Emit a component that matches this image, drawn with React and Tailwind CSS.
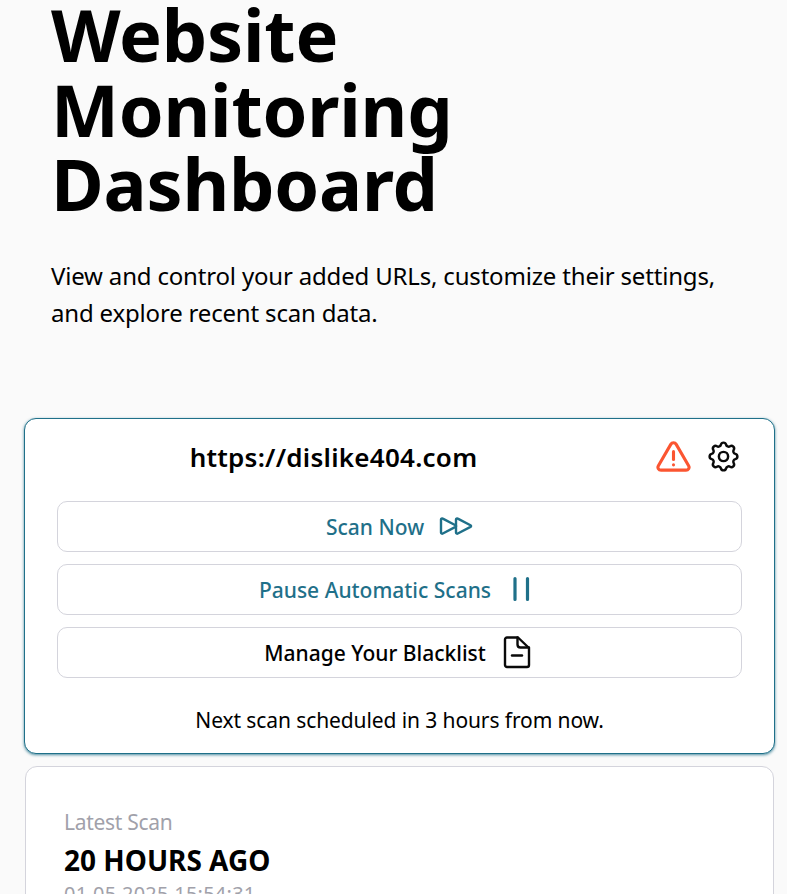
import React from "react";

function ScanIcon() {
  return (
    <svg width="34" height="20" viewBox="0 0 34 20" fill="none" stroke="#1f7089" strokeWidth="2.4" strokeLinejoin="round" strokeLinecap="round">
      <path d="M2 3.6c0-1 1-1.5 1.8-1L16.5 9.2c.8.4.8 1.3 0 1.7L3.8 17.5c-.8.5-1.8 0-1.8-1z" />
      <path d="M17 3.6c0-1 1-1.500 1.800-1l12.700 6.600c.8.400.8 1.300 0 1.700l-12.700 6.600c-.8.500-1.800 0-1.800-1z" />
    </svg>
  );
}

function PauseIcon() {
  return (
    <svg width="34" height="34" viewBox="0 0 34 34" fill="none" stroke="#1f7089" strokeWidth="3.2" strokeLinecap="round">
      <path d="M9 6.500v21M21.500 6.500v21" />
    </svg>
  );
}

function FileIcon() {
  return (
    <svg width="34" height="34" viewBox="0 0 34 34" fill="none" stroke="#0a0a0a" strokeWidth="2.4" strokeLinejoin="round" strokeLinecap="round">
      <path d="M4 4.500C4 3.200 4.900 2.500 6 2.500H17L28 13V30c0 1.200-.9 2-2 2H6c-1.100 0-2-.8-2-2z" />
      <path d="M16.500 2.500V9.500c0 1.800 1.200 3 3 3H28" />
      <path d="M11 20.500h10" />
    </svg>
  );
}

function WarnIcon() {
  return (
    <svg width="35" height="31" viewBox="0 0 36 32" fill="none" stroke="#fb5531" strokeWidth="3.2" strokeLinecap="round" strokeLinejoin="round">
      <path d="M15.200 3.500 2.400 25.500c-1.300 2.200.2 4.600 2.700 4.600h25.800c2.500 0 4-2.400 2.700-4.600L20.800 3.500c-1.300-2.200-4.300-2.200-5.600 0z" />
      <path d="M18 11v8" />
      <path d="M18 24.500v.1" />
    </svg>
  );
}

function GearIcon() {
  return (
    <svg width="37" height="37" viewBox="0 0 24 24" fill="none" stroke="#0a0a0a" strokeWidth="1.6" strokeLinecap="round" strokeLinejoin="round">
      <path d="M10.325 4.317c.426-1.756 2.924-1.756 3.350 0a1.724 1.724 0 0 0 2.573 1.066c1.543-.94 3.310.826 2.370 2.370a1.724 1.724 0 0 0 1.065 2.572c1.756.426 1.756 2.924 0 3.350a1.724 1.724 0 0 0-1.066 2.573c.94 1.543-.826 3.310-2.370 2.370a1.724 1.724 0 0 0-2.572 1.065c-.426 1.756-2.924 1.756-3.350 0a1.724 1.724 0 0 0-2.573-1.066c-1.543.94-3.310-.826-2.370-2.370a1.724 1.724 0 0 0-1.065-2.572c-1.756-.426-1.756-2.924 0-3.350a1.724 1.724 0 0 0 1.066-2.573c-.94-1.543.826-3.310 2.370-2.370.996.608 2.296.070 2.572-1.065z" />
      <circle cx="12" cy="12" r="3" />
    </svg>
  );
}

function ActionButton({ label, icon, className }) {
  return (
    <button className={`flex h-[51px] w-full items-center justify-center gap-[15px] rounded-[10px] border border-[#d4d4dc] bg-white text-[21px] font-medium ${className}`}>
      <span className="pt-[4px]">{label}</span>
      {icon}
    </button>
  );
}

export default function App() {
  return (
    <div className="h-[894px] overflow-hidden bg-[#fafafa] font-['Noto_Sans',sans-serif] text-black">
      <header className="px-[51px]">
        <h1 className="-mt-[3px] w-[500px] text-[72px] font-bold leading-[74.5px] tracking-[-0.2px]">
          Website Monitoring Dashboard
        </h1>
        <p className="mt-[36px] w-[680px] text-[24px] leading-[37px] tracking-[-0.18px]">
          View and control your added URLs, customize their settings, and explore recent scan data.
        </p>
      </header>

      <main className="mt-[87px] flex flex-col items-center gap-[12px] pl-[24px] pr-[12px]">
        <section className="w-full rounded-[12px] border border-[#1f7089] bg-white px-[32px] pb-[17px] pt-[14px] shadow-[0_1px_3px_rgba(31,112,137,0.8)]">
          <div className="flex h-[48px] items-center">
            <h2 className="w-[553px] pt-[1px] text-center text-[26px] font-semibold tracking-[0.25px]">https://dislike404.com</h2>
            <div className="ml-[46px] flex items-center gap-[14px]">
              <WarnIcon />
              <GearIcon />
            </div>
          </div>
          <div className="mt-[20px] flex flex-col gap-[12px]">
            <ActionButton label="Scan Now" icon={<ScanIcon />} className="text-[#1f7089]" />
            <ActionButton label="Pause Automatic Scans" icon={<PauseIcon />} className="text-[#1f7089]" />
            <ActionButton label="Manage Your Blacklist" icon={<FileIcon />} className="text-black" />
          </div>
          <p className="mt-[26px] text-center text-[21px] leading-[32px] tracking-[-0.1px]">
            Next scan scheduled in 3 hours from now.
          </p>
        </section>

        <section className="h-[200px] w-[749px] shrink-0 rounded-[12px] border border-[#d4d4dc] bg-white px-[38px] pt-[41px]">
          <p className="text-[21px] leading-[28px] tracking-[-0.3px] text-[#a1a1aa]">Latest Scan</p>
          <p className="mt-[8px] text-[28px] font-bold leading-[32px]">20 HOURS AGO</p>
          <p className="mt-[4px] text-[20px] leading-[28px] tracking-[0.25px] text-[#a1a1aa]">01.05.2025 15:54:31</p>
        </section>
      </main>
    </div>
  );
}
